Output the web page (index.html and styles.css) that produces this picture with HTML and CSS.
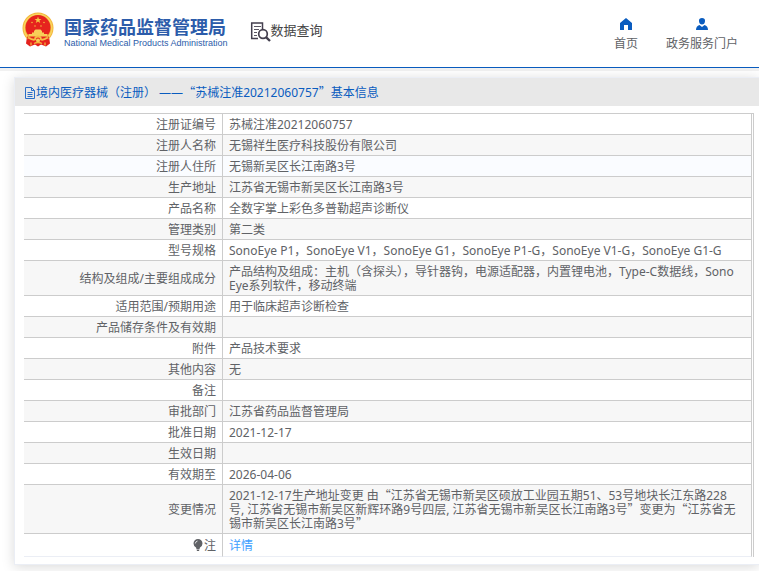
FILE: index.html
```html
<!DOCTYPE html>
<html lang="zh-CN">
<head>
<meta charset="utf-8">
<meta name="viewport" content="width=device-width, initial-scale=1">
<title>数据查询</title>
<link rel="stylesheet" href="styles.css">
</head>
<body>
<header class="site-header">
  <a class="brand" href="#">
    <svg class="emblem" viewBox="0 0 32 34" aria-hidden="true">
      <path d="M5 24 L4 31 L8 34 L13 32 L16 34 L19 32 L24 34 L28 31 L27 24Z" fill="#e3211c"/>
      <circle cx="16" cy="15.500" r="15.500" fill="#f3b63c"/>
      <circle cx="16" cy="15.500" r="13.800" fill="none" stroke="#f9d45e" stroke-width="1.500"/>
      <circle cx="16" cy="15" r="12.500" fill="#e6231e"/>
      <path d="M16 4l.9 2.500h2.600l-2.100 1.600.8 2.500-2.200-1.500-2.200 1.500.8-2.500-2.100-1.600h2.600z" fill="#f6c744"/>
      <g fill="#f3b63c"><circle cx="10" cy="10" r=".8"/><circle cx="22" cy="10" r=".8"/><circle cx="13" cy="13.500" r=".8"/><circle cx="19" cy="13.500" r=".8"/></g>
      <path d="M12 18.500l1.500-1.500h5l1.500 1.500v1.500h2v1.500H25.500v2.500h-19v-2.500H10V20h2z" fill="#f8cf58"/>
      <path d="M5 24q11 3 22 0l-1 6q-10 4-20 0z" fill="#e6231e"/>
      <path d="M6 25q5 3 7 2a3 3 0 0 1 6 0q2 1 7-2" fill="none" stroke="#f5bf45" stroke-width="1.800"/>
      <circle cx="16" cy="28" r="2" fill="#f8cf58"/>
      <path d="M9 30v3M23 30v3M12 31q4-2 8 0" fill="none" stroke="#f3b63c" stroke-width="1.300"/>
    </svg>
    <span class="brand-text">
      <span class="brand-cn">国家药品监督管理局</span>
      <span class="brand-en">National Medical Products Administration</span>
    </span>
  </a>
  <a class="query" href="#">
    <svg class="query-icon" viewBox="0 0 21 20" aria-hidden="true">
      <path d="M8 16.500H1.700V1H12.500V7" fill="none" stroke="#433f4e" stroke-width="1.500"/>
      <path d="M4 4.500h7M4 7.500h5M4 10.500h3M4 13.500h3" stroke="#5a5663" stroke-width="1.200"/>
      <circle cx="13" cy="12" r="4.300" fill="#fff" stroke="#433f4e" stroke-width="1.700"/>
      <path d="M16 15.200l4 3.800" stroke="#433f4e" stroke-width="2.400"/>
    </svg>
    <span>数据查询</span>
  </a>
  <nav class="nav">
    <a href="#">
      <svg viewBox="0 0 12 12" aria-hidden="true"><path d="M6 0L0 5v7h4V7h4v5h4V5z" fill="#0a5cbf"/></svg>
      <span>首页</span>
    </a>
    <a href="#">
      <svg viewBox="0 0 12 12" aria-hidden="true"><path d="M6 0a3 3 0 0 1 3 3.200Q8.600 6.500 6 6.500T3 3.200A3 3 0 0 1 6 0zM3.500 7L6 9l2.500-2Q12 8 12 12H0Q0 8 3.500 7z" fill="#0a5cbf"/></svg>
      <span>政务服务门户</span>
    </a>
  </nav>
</header>
<main class="panel">
  <h1 class="panel-title">
    <svg class="doc-icon" viewBox="0 0 12 12" aria-hidden="true"><path d="M1.500.5h6l3 3v8h-9zM7.500.5v3h3M3.500 5.500h5M3.500 7.500h5M3.500 9.500h5" fill="none" stroke="#2b6fc9"/></svg>
    <span>境内医疗器械（注册） ——<span class="quote">“</span>苏械注准20212060757<span class="quote">”</span>基本信息</span>
  </h1>
  <div class="panel-body">
    <table class="info">
      <tbody>
        <tr><th scope="row">注册证编号</th><td>苏械注准20212060757</td></tr>
        <tr><th scope="row">注册人名称</th><td>无锡祥生医疗科技股份有限公司</td></tr>
        <tr class="hover"><th scope="row">注册人住所</th><td>无锡新吴区长江南路3号</td></tr>
        <tr><th scope="row">生产地址</th><td>江苏省无锡市新吴区长江南路3号</td></tr>
        <tr><th scope="row">产品名称</th><td>全数字掌上彩色多普勒超声诊断仪</td></tr>
        <tr><th scope="row">管理类别</th><td>第二类</td></tr>
        <tr><th scope="row">型号规格</th><td>SonoEye P1，SonoEye V1，SonoEye G1，SonoEye P1-G，SonoEye V1-G，SonoEye G1-G</td></tr>
        <tr><th scope="row">结构及组成/主要组成成分</th><td>产品结构及组成：主机（含探头），导针器钩，电源适配器，内置锂电池，Type-C数据线，SonoEye系列软件，移动终端</td></tr>
        <tr><th scope="row">适用范围/预期用途</th><td>用于临床超声诊断检查</td></tr>
        <tr><th scope="row">产品储存条件及有效期</th><td></td></tr>
        <tr><th scope="row">附件</th><td>产品技术要求</td></tr>
        <tr><th scope="row">其他内容</th><td>无</td></tr>
        <tr><th scope="row">备注</th><td></td></tr>
        <tr><th scope="row">审批部门</th><td>江苏省药品监督管理局</td></tr>
        <tr><th scope="row">批准日期</th><td>2021-12-17</td></tr>
        <tr><th scope="row">生效日期</th><td></td></tr>
        <tr><th scope="row">有效期至</th><td>2026-04-06</td></tr>
        <tr><th scope="row">变更情况</th><td>2021-12-17生产地址变更 由<span class="quote">“</span>江苏省无锡市新吴区硕放工业园五期51、53号地块长江东路228号, 江苏省无锡市新吴区新辉环路9号四层, 江苏省无锡市新吴区长江南路3号<span class="quote">”</span>变更为<span class="quote">“</span>江苏省无锡市新吴区长江南路3号<span class="quote">”</span></td></tr>
        <tr class="note"><th scope="row"><svg class="bulb" viewBox="0 0 10 12" aria-hidden="true"><path d="M5 0a4.500 4.500 0 0 1 4.500 4.500Q9.500 7 7 8.500L6.500 10h-3L3 8.500Q.5 7 .5 4.500A4.500 4.500 0 0 1 5 0zM3.500 10.500h3L6 12H4z" fill="#606266"/><path d="M2.300 4.500Q2.500 2.500 4.500 2" fill="none" stroke="#fff" stroke-width=".8"/></svg>注</th><td><a href="#">详情</a></td></tr>
      </tbody>
    </table>
  </div>
</main>
</body>
</html>
```
FILE: styles.css
```css
* {
  box-sizing: border-box;
}

body {
  margin: 0;
  background: #fff;
  color: #606266;
  font-family: "Noto Sans", "Noto Sans CJK SC", sans-serif;
  font-size: 12px;
  line-height: 14px;
}

a {
  color: inherit;
  text-decoration: none;
}

.site-header {
  display: flex;
  align-items: flex-start;
  height: 71px;
  padding: 12px 21px 0 22px;
  border-bottom: 3px solid #f1f1f1;
  box-shadow: inset 0 -1px 0 #0a5cbf;
}

.brand {
  display: flex;
  gap: 10px;
  color: #2c5caa;
}

.emblem {
  width: 32px;
  height: 35px;
}

.brand-text {
  display: flex;
  flex-direction: column;
  padding-top: 2px;
}

.brand-cn {
  font-family: "Noto Sans CJK SC", sans-serif;
  font-size: 18px;
  font-weight: 700;
  line-height: 24px;
}

.brand-en {
  font-family: "Liberation Sans", sans-serif;
  font-size: 9px;
  line-height: 11px;
  white-space: nowrap;
}

.query {
  display: flex;
  margin-left: 22px;
  padding-top: 10px;
  color: #444;
  font-size: 13px;
  line-height: 16px;
}

.query-icon {
  width: 21px;
  height: 20px;
}

.nav {
  display: flex;
  gap: 28px;
  margin-left: auto;
  padding-top: 6px;
}

.nav a {
  display: flex;
  flex-direction: column;
  align-items: center;
  gap: 7px;
}

.nav svg {
  width: 12px;
  height: 12px;
}

.panel {
  margin: 6px 0 7px 14px;
  border: 1px solid #ebeef5;
  border-right: 0;
  box-shadow: 0 2px 12px rgba(0, 0, 0, 0.15);
}

.panel-title {
  display: flex;
  align-items: center;
  margin: 0;
  padding: 2px 9px 0;
  background: #e8e8e8;
  color: #0a5cbf;
  font-size: 12px;
  font-weight: 400;
  line-height: 26px;
}

.doc-icon {
  width: 12px;
  height: 12px;
}

.quote {
  font-family: "Noto Sans CJK SC", sans-serif;
  line-height: 12px;
}

.panel-body {
  padding: 7px 5px 7px 9px;
}

.info {
  width: 100%;
  border: 1px solid #ccc;
  border-width: 1px 1px 0 0;
  border-spacing: 0;
  padding-right: 1px;
  table-layout: fixed;
}

.info th,
.info td {
  padding: 4px 6px 2px;
  border-right: 1px solid #ccc;
  border-bottom: 1px solid #ccc;
  vertical-align: middle;
  font-weight: 400;
}

.info th {
  width: 199px;
  text-align: right;
}

.info td {
  height: 21px;
  padding-right: 12px;
  word-break: break-all;
}

.info tr:nth-child(even) {
  background: #f7f7f7;
}

.info .hover {
  background: #fafcff;
}

.info .note th,
.info .note td {
  height: 23px;
  border-bottom-color: #ebeef5;
}

.note a {
  color: #409eff;
}

.bulb {
  width: 10px;
  height: 12px;
  margin-right: 1px;
  vertical-align: -1px;
}
```
